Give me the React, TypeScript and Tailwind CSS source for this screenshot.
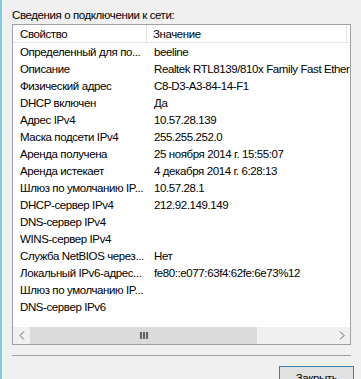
const rows: [string, string][] = [
  ["Определенный для по...", "beeline"],
  ["Описание", "Realtek RTL8139/810x Family Fast Ethernet NIC"],
  ["Физический адрес", "C8-D3-A3-84-14-F1"],
  ["DHCP включен", "Да"],
  ["Адрес IPv4", "10.57.28.139"],
  ["Маска подсети IPv4", "255.255.252.0"],
  ["Аренда получена", "25 ноября 2014 г. 15:55:07"],
  ["Аренда истекает", "4 декабря 2014 г. 6:28:13"],
  ["Шлюз по умолчанию IP...", "10.57.28.1"],
  ["DHCP-сервер IPv4", "212.92.149.149"],
  ["DNS-сервер IPv4", ""],
  ["WINS-сервер IPv4", ""],
  ["Служба NetBIOS через...", "Нет"],
  ["Локальный IPv6-адрес...", "fe80::e077:63f4:62fe:6e73%12"],
  ["Шлюз по умолчанию IP...", ""],
  ["DNS-сервер IPv6", ""],
]

export default function App() {
  return (
    <div className="w-[361px] h-[379px] overflow-hidden bg-[#f0f0f0] border-l-2 border-[#7fcbe6] text-[11.5px] tracking-[-0.4px] leading-[16px] text-black [font-family:'Liberation_Sans',Arial,sans-serif]">
      <div className="ml-[10px] pt-[7px] h-[23px] whitespace-nowrap">Сведения о подключении к сети:</div>
      <div className="ml-[10px] mt-[1px] w-[339px] h-[321px] border border-[#a0a0a0] bg-white flex flex-col overflow-hidden">
        <div className="flex h-[18px] border-b border-[#e5e5e5] shrink-0">
          <div className="w-[134px] pl-[7px] pt-[1px] border-r border-[#e5e5e5] whitespace-nowrap">Свойство</div>
          <div className="flex-1 pl-[6px] pt-[1px] whitespace-nowrap">Значение</div>
          <div className="w-[4px] border-l border-[#e5e5e5]"></div>
        </div>
        <div className="flex-1 overflow-hidden">
          {rows.map(([k, v], i) => (
            <div key={i} className="flex h-[17px] items-center whitespace-nowrap">
              <div className="w-[135px] pl-[7px] shrink-0 overflow-hidden">{k}</div>
              <div className="pl-[6px] flex-1 min-w-0 overflow-hidden">{v}</div>
            </div>
          ))}
        </div>
        <div className="flex h-[17px] shrink-0 bg-[#f0f0f0]">
          <div className="w-[17px] flex items-center justify-center bg-[#f0f0f0]">
            <svg width="6" height="9" viewBox="0 0 6 9"><path d="M5 0.5 L1 4.5 L5 8.5" fill="none" stroke="#606060" strokeWidth="1" /></svg>
          </div>
          <div className="w-[227px] bg-[#dadada] flex items-center justify-center">
            <svg width="8" height="7" viewBox="0 0 8 7"><rect x="0" y="0" width="2" height="7" fill="#606060" /><rect x="3" y="0" width="2" height="7" fill="#606060" /><rect x="6" y="0" width="2" height="7" fill="#606060" /></svg>
          </div>
          <div className="flex-1"></div>
          <div className="w-[17px] flex items-center justify-center">
            <svg width="6" height="9" viewBox="0 0 6 9"><path d="M1 0.5 L5 4.5 L1 8.5" fill="none" stroke="#606060" strokeWidth="1" /></svg>
          </div>
        </div>
      </div>
      <div className="ml-[10px] mt-[10px] w-[339px] h-px bg-[#a0a0a0]"></div>
      <div className="flex justify-end mt-[10px] pr-[7px]">
        <button className="w-[75px] h-[23px] border border-[#3c7fb1] bg-[#e1e1e1] text-black">Закрыть</button>
      </div>
    </div>
  )
}
